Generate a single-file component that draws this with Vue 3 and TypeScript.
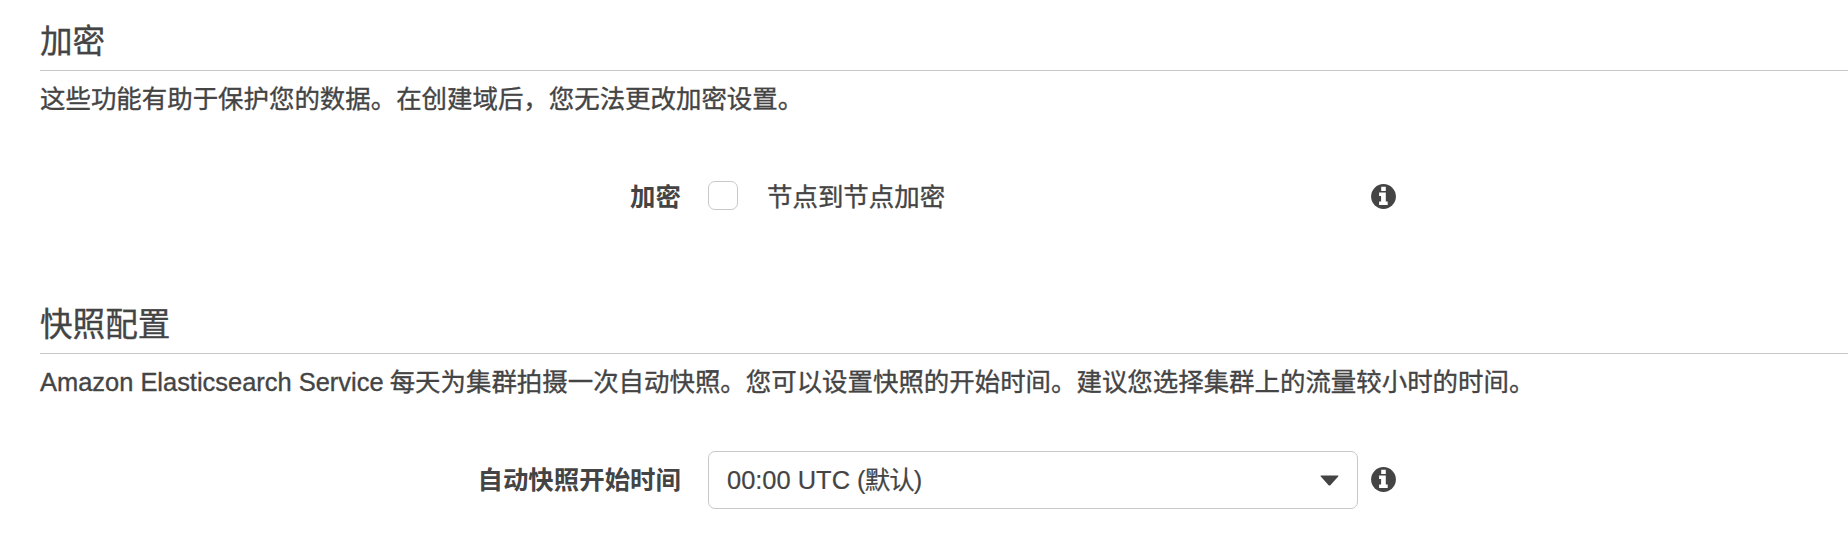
<script setup lang="ts">
import { ref } from 'vue'
const encrypt = ref(false)
</script>

<template>
  <main class="page">
    <section class="block">
      <h2>加密</h2>
      <p>这些功能有助于保护您的数据。在创建域后，您无法更改加密设置。</p>
      <div class="row">
        <label class="name" for="enc">加密</label>
        <div class="field">
          <input id="enc" v-model="encrypt" class="check" type="checkbox" />
          <span class="option">节点到节点加密</span>
        </div>
        <svg class="info" viewBox="0 0 25 25"><circle cx="12.5" cy="12.5" r="12.4" /><path d="M10.2 2.8h4.6v4.1h-4.6zM8.1 8.5h6.7v8.9h1.9v3.5H8.1v-3.5h2v-5.5h-2z" /></svg>
      </div>
    </section>
    <section class="block">
      <h2>快照配置</h2>
      <p><span class="latin">Amazon Elasticsearch Service </span>每天为集群拍摄一次自动快照。您可以设置快照的开始时间。建议您选择集群上的流量较小时的时间。</p>
      <div class="row">
        <span class="name">自动快照开始时间</span>
        <div class="field">
          <button class="select" type="button">
            <span class="value">00:00 UTC <span class="note">(默认)</span></span>
            <svg class="caret" viewBox="0 0 19 11"><path d="M1.2.5h16.6q1.2 0 .4 1L10.6 10q-1.1 1.1-2.2 0L.8 1.5q-.8-1 .4-1z" /></svg>
          </button>
        </div>
        <svg class="info" viewBox="0 0 25 25"><circle cx="12.5" cy="12.5" r="12.4" /><path d="M10.2 2.8h4.6v4.1h-4.6zM8.1 8.5h6.7v8.9h1.9v3.5H8.1v-3.5h2v-5.5h-2z" /></svg>
      </div>
    </section>
  </main>
</template>

<style>
body { margin: 0; background: #fff; }
</style>
<style scoped>
.page { height: 552px; overflow: hidden; padding-left: 40px; box-sizing: border-box; color: #444; font: 25.44px/36px "Liberation Sans", "Noto Sans CJK SC", sans-serif; white-space: nowrap; -webkit-text-stroke: 0.35px #444; }
.block { height: 283px; }
h2 { margin: 0; height: 71px; box-sizing: border-box; border-bottom: 1px solid #c8c8c8; padding-top: 20px; font-size: 32.6px; line-height: 44px; font-weight: 400; }
p { margin: 0; padding-top: 10px; height: 37px; }
.latin { margin-right: -1px; }
.row { display: flex; align-items: center; height: 58px; margin-top: 50px; }
.name { width: 641px; text-align: right; font-weight: 700; -webkit-text-stroke: 0; padding-bottom: 1px; }
.field { width: 650px; margin-left: 27px; display: flex; align-items: center; }
.check { appearance: none; box-sizing: border-box; width: 30px; height: 29px; margin: 0 29px 3px 0; border: 1px solid #c8c8c8; border-radius: 7px; background: #fff; }
.option { padding-bottom: 1px; }
.select { width: 650px; height: 58px; box-sizing: border-box; border: 1px solid #c8c8c8; border-radius: 7px; background: #fff; padding: 0 18px; display: flex; align-items: center; justify-content: space-between; color: inherit; font: inherit; }
.value { padding-bottom: 1px; -webkit-text-stroke: 0.2px #444; }
.note { letter-spacing: -0.9px; }
.caret { width: 19px; height: 11px; fill: #444; }
.info { width: 25px; height: 25px; margin: 0 0 1px 13px; fill: #444; }
.info path { fill: #fff; }
</style>
